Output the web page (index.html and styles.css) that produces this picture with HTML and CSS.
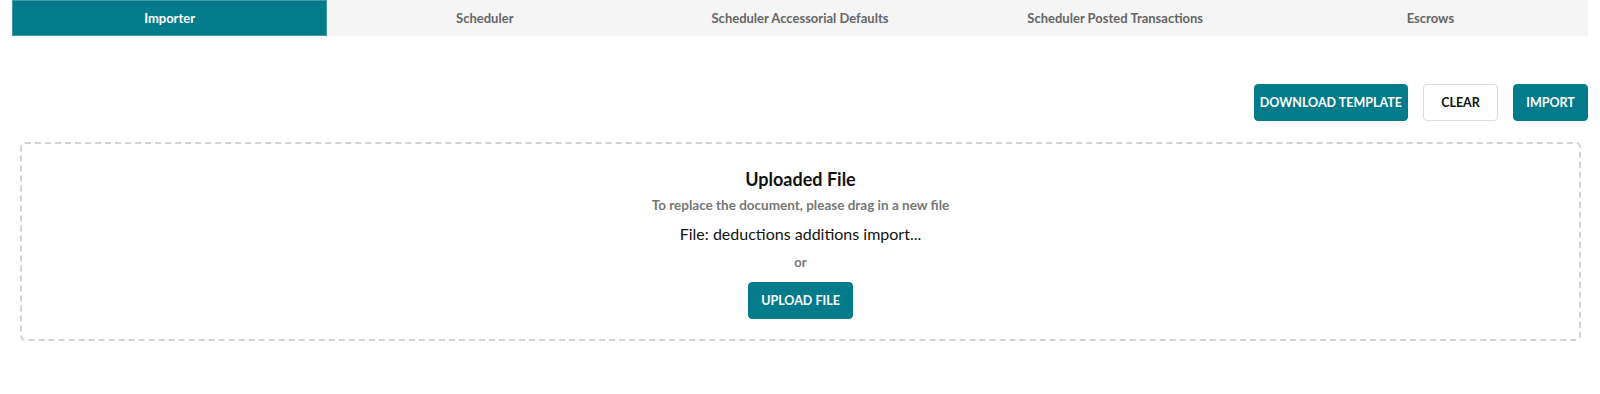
FILE: index.html
```html
<!DOCTYPE html>
<html lang="en">
<head>
  <meta charset="UTF-8" />
  <title>Importer</title>
  <link rel="stylesheet" href="styles.css">
</head>
<body>

<div class="page">
  <ul class="tabs">
    <li class="tab active">Importer</li>
    <li class="tab">Scheduler</li>
    <li class="tab">Scheduler Accessorial Defaults</li>
    <li class="tab">Scheduler Posted Transactions</li>
    <li class="tab">Escrows</li>
  </ul>

  <div class="toolbar">
    <button class="btn primary">DOWNLOAD TEMPLATE</button>
    <button class="btn outline">CLEAR</button>
    <button class="btn primary">IMPORT</button>
  </div>

  <!-- Drop zone -->
  <section class="dropzone">
    <h2>Uploaded File</h2>
    <p class="hint">To replace the document, please drag in a new file</p>
    <p class="file-name">File: deductions additions import...</p>
    <p class="or">or</p>
    <button class="btn primary upload">UPLOAD FILE</button>
  </section>
</div>

</body>
</html>
```

FILE: styles.css
```css
body {
  margin: 0;
  font-family: Lato, 'Liberation Sans', sans-serif;
  background-color: #fff;
  color: #111;
}

.page {
  padding: 0 12px;
}

.tabs {
  list-style: none;
  margin: 0;
  padding: 0;
  display: grid;
  grid-template-columns: repeat(5, 1fr);
  background-color: #f5f5f5;
}

.tab {
  height: 36px;
  line-height: 36px;
  text-align: center;
  font-size: 13px;
  font-weight: bold;
  color: #666;
}

.tab.active {
  background-color: #037b8b;
  color: #fff;
  box-shadow: inset 0 0 0 1px #3d9aa5;
}

.toolbar {
  display: flex;
  justify-content: flex-end;
  gap: 15px;
  margin-top: 48px;
}

.btn {
  height: 37px;
  min-width: 75px;
  padding: 0 5px;
  border-radius: 4px;
  border: 1px solid transparent;
  font-family: Lato, 'Liberation Sans', sans-serif;
  font-size: 12.5px;
  font-weight: bold;
  cursor: pointer;
}

.btn.primary {
  background-color: #037b8b;
  border-color: #037b8b;
  color: #fff;
}

.btn.outline {
  background-color: #fff;
  border-color: #dcdcdc;
  color: #111;
}

.dropzone {
  margin: 21px 7px 0 8px;
  height: 199px;
  box-sizing: border-box;
  padding-top: 24px;
  border: 2px dashed #d2d2d2;
  border-radius: 5px;
  text-align: center;
}

.dropzone h2 {
  margin: 0;
  font-size: 18px;
  line-height: 22px;
}

.dropzone p {
  margin: 0;
}

.hint {
  margin-top: 6px !important;
  font-size: 13.5px;
  font-weight: bold;
  line-height: 18px;
  color: #777;
}

.file-name {
  margin-top: 9px !important;
  font-size: 16px;
  line-height: 22px;
}

.or {
  margin-top: 8px !important;
  font-size: 13px;
  font-weight: bold;
  line-height: 18px;
  color: #777;
}

.upload {
  margin-top: 11px;
  padding: 0 12px;
}
```
